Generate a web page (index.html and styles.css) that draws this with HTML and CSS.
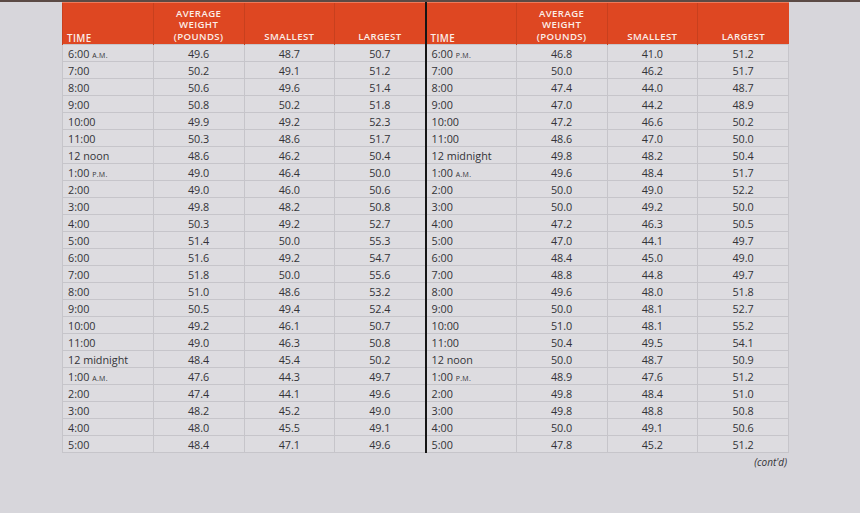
FILE: index.html
```html
<!DOCTYPE html>
<html>
<head>
<meta charset="utf-8">
<link rel="stylesheet" href="styles.css">
</head>
<body>
<div class="topband"></div>
<div class="wrap">
<table class="data">
<thead>
<tr>
<th class="t">TIME</th><th>AVERAGE<br>WEIGHT<br>(POUNDS)</th><th>SMALLEST</th><th class="split">LARGEST</th>
<th class="t">TIME</th><th>AVERAGE<br>WEIGHT<br>(POUNDS)</th><th>SMALLEST</th><th>LARGEST</th>
</tr>
</thead>
<tbody>
<tr><td class="t">6:00 <small>A.M.</small></td><td>49.6</td><td>48.7</td><td class="split">50.7</td><td class="t">6:00 <small>P.M.</small></td><td>46.8</td><td>41.0</td><td>51.2</td></tr>
<tr><td class="t">7:00</td><td>50.2</td><td>49.1</td><td class="split">51.2</td><td class="t">7:00</td><td>50.0</td><td>46.2</td><td>51.7</td></tr>
<tr><td class="t">8:00</td><td>50.6</td><td>49.6</td><td class="split">51.4</td><td class="t">8:00</td><td>47.4</td><td>44.0</td><td>48.7</td></tr>
<tr><td class="t">9:00</td><td>50.8</td><td>50.2</td><td class="split">51.8</td><td class="t">9:00</td><td>47.0</td><td>44.2</td><td>48.9</td></tr>
<tr><td class="t">10:00</td><td>49.9</td><td>49.2</td><td class="split">52.3</td><td class="t">10:00</td><td>47.2</td><td>46.6</td><td>50.2</td></tr>
<tr><td class="t">11:00</td><td>50.3</td><td>48.6</td><td class="split">51.7</td><td class="t">11:00</td><td>48.6</td><td>47.0</td><td>50.0</td></tr>
<tr><td class="t">12 noon</td><td>48.6</td><td>46.2</td><td class="split">50.4</td><td class="t">12 midnight</td><td>49.8</td><td>48.2</td><td>50.4</td></tr>
<tr><td class="t">1:00 <small>P.M.</small></td><td>49.0</td><td>46.4</td><td class="split">50.0</td><td class="t">1:00 <small>A.M.</small></td><td>49.6</td><td>48.4</td><td>51.7</td></tr>
<tr><td class="t">2:00</td><td>49.0</td><td>46.0</td><td class="split">50.6</td><td class="t">2:00</td><td>50.0</td><td>49.0</td><td>52.2</td></tr>
<tr><td class="t">3:00</td><td>49.8</td><td>48.2</td><td class="split">50.8</td><td class="t">3:00</td><td>50.0</td><td>49.2</td><td>50.0</td></tr>
<tr><td class="t">4:00</td><td>50.3</td><td>49.2</td><td class="split">52.7</td><td class="t">4:00</td><td>47.2</td><td>46.3</td><td>50.5</td></tr>
<tr><td class="t">5:00</td><td>51.4</td><td>50.0</td><td class="split">55.3</td><td class="t">5:00</td><td>47.0</td><td>44.1</td><td>49.7</td></tr>
<tr><td class="t">6:00</td><td>51.6</td><td>49.2</td><td class="split">54.7</td><td class="t">6:00</td><td>48.4</td><td>45.0</td><td>49.0</td></tr>
<tr><td class="t">7:00</td><td>51.8</td><td>50.0</td><td class="split">55.6</td><td class="t">7:00</td><td>48.8</td><td>44.8</td><td>49.7</td></tr>
<tr><td class="t">8:00</td><td>51.0</td><td>48.6</td><td class="split">53.2</td><td class="t">8:00</td><td>49.6</td><td>48.0</td><td>51.8</td></tr>
<tr><td class="t">9:00</td><td>50.5</td><td>49.4</td><td class="split">52.4</td><td class="t">9:00</td><td>50.0</td><td>48.1</td><td>52.7</td></tr>
<tr><td class="t">10:00</td><td>49.2</td><td>46.1</td><td class="split">50.7</td><td class="t">10:00</td><td>51.0</td><td>48.1</td><td>55.2</td></tr>
<tr><td class="t">11:00</td><td>49.0</td><td>46.3</td><td class="split">50.8</td><td class="t">11:00</td><td>50.4</td><td>49.5</td><td>54.1</td></tr>
<tr><td class="t">12 midnight</td><td>48.4</td><td>45.4</td><td class="split">50.2</td><td class="t">12 noon</td><td>50.0</td><td>48.7</td><td>50.9</td></tr>
<tr><td class="t">1:00 <small>A.M.</small></td><td>47.6</td><td>44.3</td><td class="split">49.7</td><td class="t">1:00 <small>P.M.</small></td><td>48.9</td><td>47.6</td><td>51.2</td></tr>
<tr><td class="t">2:00</td><td>47.4</td><td>44.1</td><td class="split">49.6</td><td class="t">2:00</td><td>49.8</td><td>48.4</td><td>51.0</td></tr>
<tr><td class="t">3:00</td><td>48.2</td><td>45.2</td><td class="split">49.0</td><td class="t">3:00</td><td>49.8</td><td>48.8</td><td>50.8</td></tr>
<tr><td class="t">4:00</td><td>48.0</td><td>45.5</td><td class="split">49.1</td><td class="t">4:00</td><td>50.0</td><td>49.1</td><td>50.6</td></tr>
<tr><td class="t">5:00</td><td>48.4</td><td>47.1</td><td class="split">49.6</td><td class="t">5:00</td><td>47.8</td><td>45.2</td><td>51.2</td></tr>
</tbody>
</table>
<p class="contd">(cont'd)</p>
</div>
</body>
</html>
```
FILE: styles.css
```css
html, body {
  margin: 0;
  padding: 0;
}
body {
  background: #d7d6db;
  font-family: "Open Sans", "Noto Sans", sans-serif;
  color: #333337;
  width: 860px;
  height: 513px;
  overflow: hidden;
}
.topband {
  height: 2px;
  background: #5b4a45;
}
.wrap {
  margin-left: 62px;
  width: 727px;
}
.data {
  border-collapse: collapse;
  table-layout: fixed;
  width: 727px;
}
.data thead tr {
  height: 42px;
}
.data tbody tr {
  height: 17px;
}
.data th {
  background: #de4722;
  color: #fbeee8;
  font-weight: 600;
  font-size: 9.6px;
  line-height: 11.5px;
  letter-spacing: 0.4px;
  vertical-align: bottom;
  padding: 0 2px 2px;
  text-align: center;
  border-top: 1px solid #ee7a5a;
  border-left: 1px solid #c8401e;
}
.data th.t {
  text-align: left;
  padding-left: 4px;
  padding-bottom: 0;
  font-size: 9.8px;
}
.data td {
  padding: 0;
  font-size: 10.8px;
  line-height: 15px;
  text-align: center;
  background: #dddce0;
  border: 1px solid #c6c5ca;
  white-space: nowrap;
  overflow: hidden;
}
.data td.t {
  text-align: left;
  padding-left: 5px;
}
.data td small {
  font-size: 7px;
  line-height: 1;
  letter-spacing: 0.3px;
}
.data .split {
  border-right: 2px solid #151515;
}
.contd {
  margin: 2px 0 0;
  text-align: right;
  font-style: italic;
  font-size: 10px;
  padding-right: 2px;
}
```
